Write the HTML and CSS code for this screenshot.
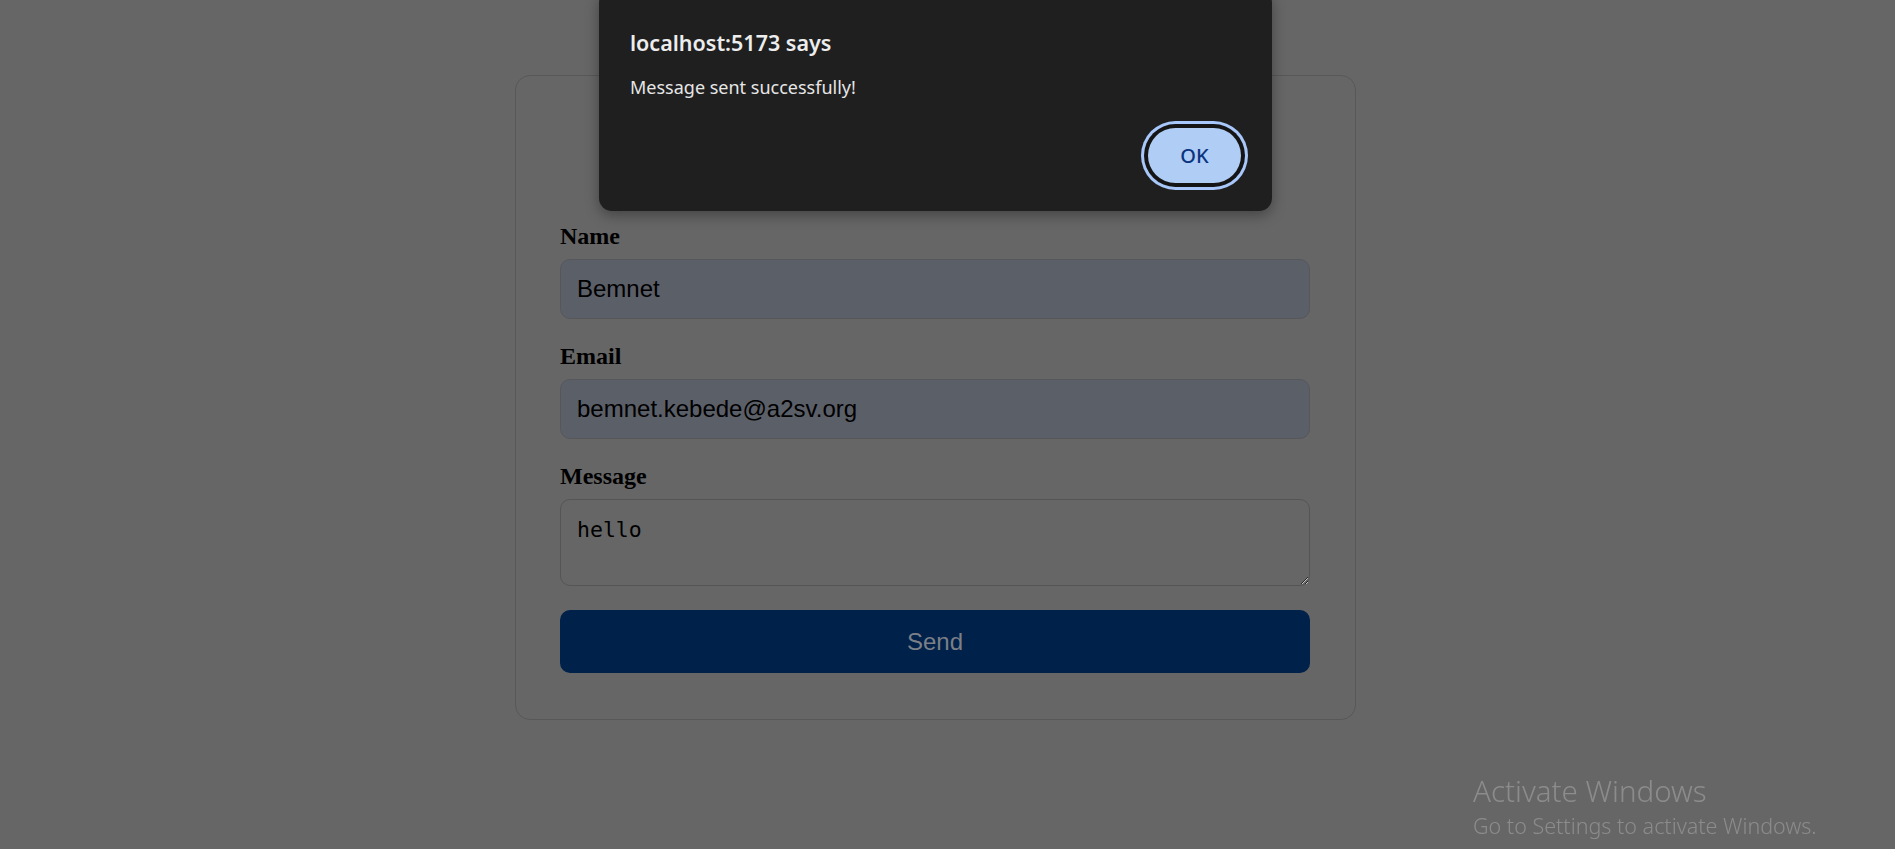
FILE: index.html
```html
<!DOCTYPE html>
<html lang="en">
<head>
<meta charset="utf-8">
<title>Contact</title>
<link rel="stylesheet" href="styles.css">
</head>
<body>
<main class="page">
  <form class="card">
    <div class="field">
      <label class="label" for="name">Name</label>
      <input class="input" id="name" type="text" value="Bemnet">
    </div>
    <div class="field">
      <label class="label" for="email">Email</label>
      <input class="input" id="email" type="email" value="bemnet.kebede@a2sv.org">
    </div>
    <div class="field">
      <label class="label" for="msg">Message</label>
      <textarea class="textarea" id="msg">hello</textarea>
    </div>
    <button class="send" type="button">Send</button>
  </form>
</main>

<div class="dialog" role="alertdialog">
  <div class="dialog-title">localhost:5173 says</div>
  <div class="dialog-msg">Message sent successfully!</div>
  <div class="dialog-actions">
    <button class="ok" type="button">OK</button>
  </div>
</div>

<div class="activate">
  <div class="activate-title">Activate Windows</div>
  <div class="activate-sub">Go to Settings to activate Windows.</div>
</div>
</body>
</html>
```
FILE: styles.css
```css
* { box-sizing: border-box; }

html, body {
  margin: 0;
  height: 100%;
  background: #666666;
  overflow: hidden;
}

.page {
  display: flex;
  justify-content: center;
  padding: 75px 24px 0 0;
}

.card {
  width: 841px;
  border: 1px solid #585858;
  border-radius: 15px;
  padding: 147px 45px 46px 44px;
  display: flex;
  flex-direction: column;
}

.field {
  display: flex;
  flex-direction: column;
  margin-bottom: 24px;
}

.label {
  font-family: "Liberation Serif", serif;
  font-weight: bold;
  font-size: 24px;
  color: #000;
  margin-bottom: 9px;
}

.input {
  font-family: "Liberation Sans", Arial, sans-serif;
  font-size: 24px;
  color: #000;
  background: #5b5f68;
  border: 1px solid #55575b;
  border-radius: 10px;
  padding: 15px 16px;
  height: 60px;
  outline: none;
}

.textarea {
  font-family: "DejaVu Sans Mono", monospace;
  font-size: 21.5px;
  color: #000;
  background: #666666;
  border: 1px solid #555555;
  border-radius: 10px;
  padding: 17px 16px 12px;
  height: 87px;
  outline: none;
}

.send {
  height: 63px;
  border: none;
  border-radius: 10px;
  background: #00214a;
  color: #7b7f87;
  font-family: "Liberation Sans", Arial, sans-serif;
  font-size: 24px;
}

.dialog {
  position: absolute;
  left: 599px;
  top: -10px;
  width: 673px;
  height: 221px;
  background: #1f1f1f;
  border-radius: 13px;
  box-shadow: 0 4px 14px rgba(0, 0, 0, 0.35);
  padding: 40px 31px 0 31px;
  display: flex;
  flex-direction: column;
  font-family: "Noto Sans", "Open Sans", sans-serif;
}

.dialog-title {
  color: #ededed;
  font-size: 21.5px;
  font-weight: 600;
  line-height: 26px;
}

.dialog-msg {
  color: #e6e6e6;
  font-size: 18px;
  line-height: 24px;
  margin-top: 19px;
}

.dialog-actions {
  display: flex;
  justify-content: flex-end;
  margin-top: 29px;
}

.ok {
  width: 93px;
  height: 55px;
  border: none;
  border-radius: 28px;
  background: #b0cdf6;
  color: #0a3580;
  font-family: "Noto Sans", "Open Sans", sans-serif;
  font-size: 20px;
  font-weight: 500;
  box-shadow: 0 0 0 4px #151515, 0 0 0 7px #a8c7fa;
}

.activate {
  position: fixed;
  left: 1473px;
  top: 773px;
  color: #8c8c8c;
  font-family: "Noto Sans", "Open Sans", sans-serif;
  font-weight: 300;
}

.activate-title {
  font-size: 29.5px;
  line-height: 36px;
}

.activate-sub {
  font-size: 21.5px;
  line-height: 33px;
}
```
